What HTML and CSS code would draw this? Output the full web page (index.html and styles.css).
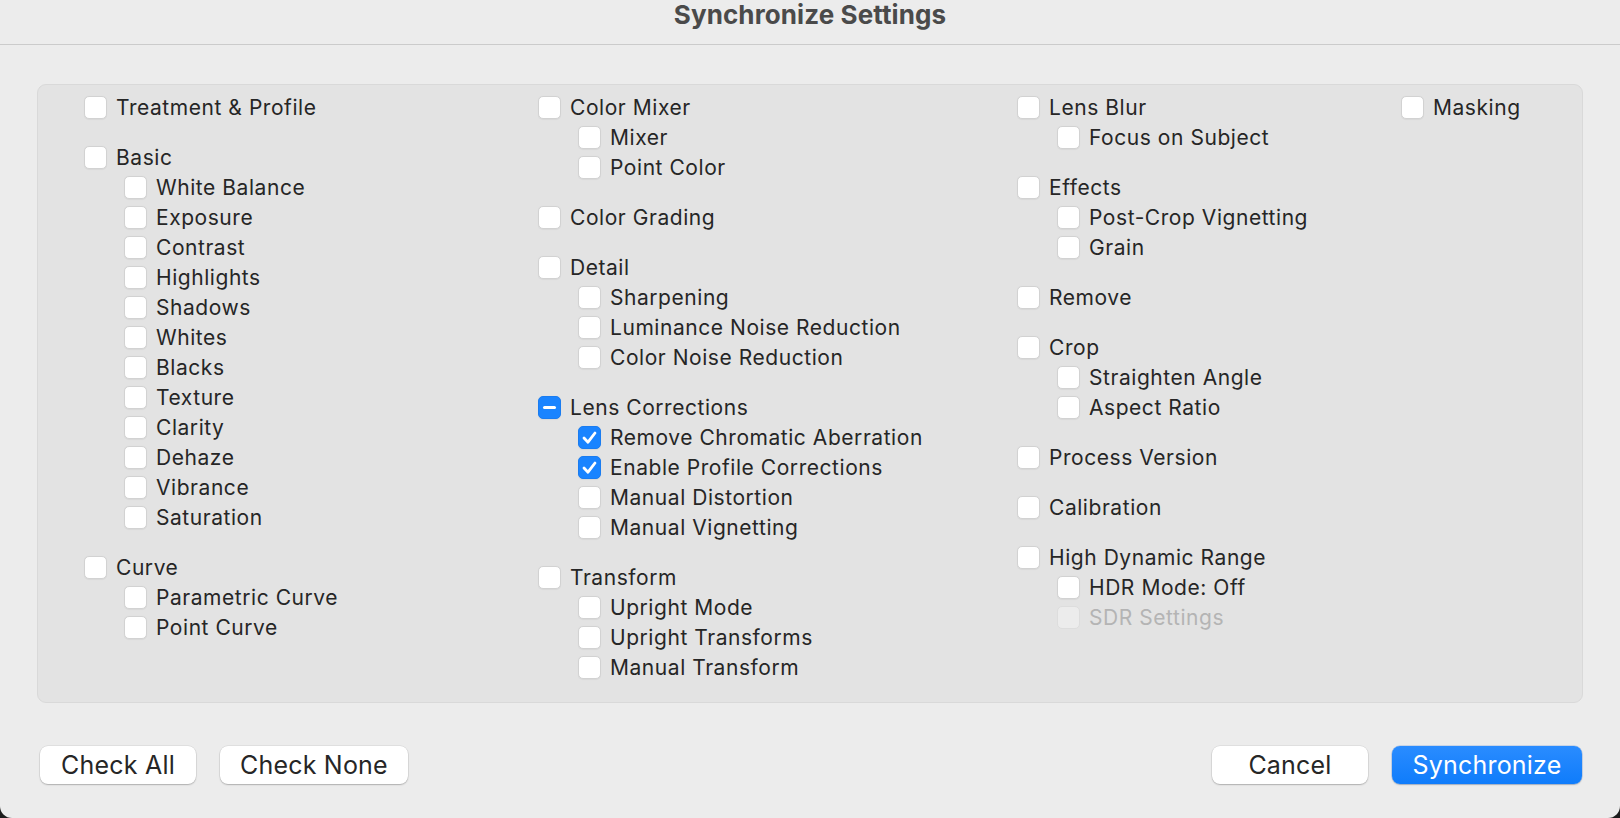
FILE: index.html
```html
<!DOCTYPE html>
<html>
<head>
<meta charset="utf-8">
<title>Synchronize Settings</title>
<link rel="stylesheet" href="styles.css">
</head>
<body>
<div class="window">
  <header class="titlebar">Synchronize Settings</header>
  <main class="content">
    <section class="panel">
      <div class="col col1">
        <div class="group">
          <label class="row"><span class="box"></span>Treatment &amp; Profile</label>
        </div>
        <div class="group">
          <label class="row"><span class="box"></span>Basic</label>
          <label class="row sub"><span class="box"></span>White Balance</label>
          <label class="row sub"><span class="box"></span>Exposure</label>
          <label class="row sub"><span class="box"></span>Contrast</label>
          <label class="row sub"><span class="box"></span>Highlights</label>
          <label class="row sub"><span class="box"></span>Shadows</label>
          <label class="row sub"><span class="box"></span>Whites</label>
          <label class="row sub"><span class="box"></span>Blacks</label>
          <label class="row sub"><span class="box"></span>Texture</label>
          <label class="row sub"><span class="box"></span>Clarity</label>
          <label class="row sub"><span class="box"></span>Dehaze</label>
          <label class="row sub"><span class="box"></span>Vibrance</label>
          <label class="row sub"><span class="box"></span>Saturation</label>
        </div>
        <div class="group">
          <label class="row"><span class="box"></span>Curve</label>
          <label class="row sub"><span class="box"></span>Parametric Curve</label>
          <label class="row sub"><span class="box"></span>Point Curve</label>
        </div>
      </div>
      <div class="col col2">
        <div class="group">
          <label class="row"><span class="box"></span>Color Mixer</label>
          <label class="row sub"><span class="box"></span>Mixer</label>
          <label class="row sub"><span class="box"></span>Point Color</label>
        </div>
        <div class="group">
          <label class="row"><span class="box"></span>Color Grading</label>
        </div>
        <div class="group">
          <label class="row"><span class="box"></span>Detail</label>
          <label class="row sub"><span class="box"></span>Sharpening</label>
          <label class="row sub"><span class="box"></span>Luminance Noise Reduction</label>
          <label class="row sub"><span class="box"></span>Color Noise Reduction</label>
        </div>
        <div class="group">
          <label class="row"><span class="box on"><svg viewBox="0 0 23 23" width="23" height="23"><line x1="6.5" y1="11.5" x2="16.5" y2="11.5" stroke="#fff" stroke-width="3" stroke-linecap="round"/></svg></span>Lens Corrections</label>
          <label class="row sub"><span class="box on"><svg viewBox="0 0 23 23" width="23" height="23"><polyline points="6,12 10,16.2 17,7" fill="none" stroke="#fff" stroke-width="2.8" stroke-linecap="round" stroke-linejoin="round"/></svg></span>Remove Chromatic Aberration</label>
          <label class="row sub"><span class="box on"><svg viewBox="0 0 23 23" width="23" height="23"><polyline points="6,12 10,16.2 17,7" fill="none" stroke="#fff" stroke-width="2.8" stroke-linecap="round" stroke-linejoin="round"/></svg></span>Enable Profile Corrections</label>
          <label class="row sub"><span class="box"></span>Manual Distortion</label>
          <label class="row sub"><span class="box"></span>Manual Vignetting</label>
        </div>
        <div class="group">
          <label class="row"><span class="box"></span>Transform</label>
          <label class="row sub"><span class="box"></span>Upright Mode</label>
          <label class="row sub"><span class="box"></span>Upright Transforms</label>
          <label class="row sub"><span class="box"></span>Manual Transform</label>
        </div>
      </div>
      <div class="col col3">
        <div class="group">
          <label class="row"><span class="box"></span>Lens Blur</label>
          <label class="row sub"><span class="box"></span>Focus on Subject</label>
        </div>
        <div class="group">
          <label class="row"><span class="box"></span>Effects</label>
          <label class="row sub"><span class="box"></span>Post-Crop Vignetting</label>
          <label class="row sub"><span class="box"></span>Grain</label>
        </div>
        <div class="group">
          <label class="row"><span class="box"></span>Remove</label>
        </div>
        <div class="group">
          <label class="row"><span class="box"></span>Crop</label>
          <label class="row sub"><span class="box"></span>Straighten Angle</label>
          <label class="row sub"><span class="box"></span>Aspect Ratio</label>
        </div>
        <div class="group">
          <label class="row"><span class="box"></span>Process Version</label>
        </div>
        <div class="group">
          <label class="row"><span class="box"></span>Calibration</label>
        </div>
        <div class="group">
          <label class="row"><span class="box"></span>High Dynamic Range</label>
          <label class="row sub"><span class="box"></span>HDR Mode: Off</label>
          <label class="row sub disabled"><span class="box"></span>SDR Settings</label>
        </div>
      </div>
      <div class="col col4">
        <div class="group">
          <label class="row"><span class="box"></span>Masking</label>
        </div>
      </div>
    </section>
    <footer class="actions">
      <div class="btn-group">
        <button class="btn">Check All</button>
        <button class="btn">Check None</button>
      </div>
      <div class="btn-group">
        <button class="btn">Cancel</button>
        <button class="btn primary">Synchronize</button>
      </div>
    </footer>
  </main>
</div>
</body>
</html>
```

FILE: styles.css
```css
* {
  box-sizing: border-box;
}

html,
body {
  margin: 0;
  padding: 0;
  background: #1c1c1c;
}

body {
  width: 1620px;
  height: 818px;
  overflow: hidden;
  font-family: Inter, "Noto Sans", "Liberation Sans", sans-serif;
  color: #262626;
}

.window {
  width: 1620px;
  height: 818px;
  background: #ececec;
  border-radius: 0 0 12px 12px;
  display: flex;
  flex-direction: column;
}

.titlebar {
  height: 45px;
  border-bottom: 1px solid #cbcbcb;
  display: flex;
  align-items: flex-start;
  justify-content: center;
  padding-top: 0;
  font-size: 26px;
  line-height: 30px;
  font-weight: 700;
  color: #4a4a4a;
  letter-spacing: 0.1px;
}

.content {
  flex: 1;
  padding: 39px 37px 0 37px;
  display: flex;
  flex-direction: column;
}

.panel {
  height: 619px;
  background: #e3e3e3;
  border: 1px solid #d9d9d9;
  border-radius: 9px;
  padding: 7px 0 0 46px;
  display: grid;
  grid-template-columns: 454px 479px 384px 1fr;
}

.col {
  display: flex;
  flex-direction: column;
  gap: 20px;
}

.group {
  display: flex;
  flex-direction: column;
}

.row {
  height: 30px;
  display: flex;
  align-items: center;
  gap: 9px;
  font-size: 21px;
  letter-spacing: 0.55px;
  color: #262626;
  white-space: nowrap;
}

.row.sub {
  padding-left: 40px;
}

.box {
  width: 23px;
  height: 23px;
  flex: none;
  background: #ffffff;
  border: 1px solid #d2d2d2;
  border-radius: 5px;
  box-shadow: 0 0.5px 1px rgba(0, 0, 0, 0.05);
  display: flex;
  align-items: center;
  justify-content: center;
  overflow: hidden;
}

.box svg {
  display: block;
  flex: none;
}

.box.on {
  background: #1a84ff;
  border-color: #1a7cf0;
}

.row.disabled {
  color: #b4b4b4;
}

.row.disabled .box {
  background: #ececec;
  border-color: #dddddd;
  box-shadow: none;
}

.actions {
  margin-top: 43px;
  display: flex;
  justify-content: space-between;
  padding: 0 1px 0 3px;
}

.btn-group {
  display: flex;
  gap: 24px;
}

.btn {
  height: 38px;
  min-width: 156px;
  padding: 0 20px;
  border: none;
  border-radius: 8px;
  background: #ffffff;
  box-shadow: 0 0 0 0.5px rgba(0, 0, 0, 0.1), 0 1px 1.5px rgba(0, 0, 0, 0.22);
  font-family: Inter, "Noto Sans", "Liberation Sans", sans-serif;
  font-size: 25px;
  color: #262626;
  letter-spacing: 0.2px;
  line-height: 1;
  display: flex;
  align-items: center;
  justify-content: center;
}

.btn.primary {
  background: linear-gradient(#2a8cff, #0f7cfb);
  color: #ffffff;
  min-width: 190px;
  box-shadow: 0 0 0 0.5px rgba(0, 80, 200, 0.3), 0 1px 1.5px rgba(0, 0, 0, 0.2);
}
```
